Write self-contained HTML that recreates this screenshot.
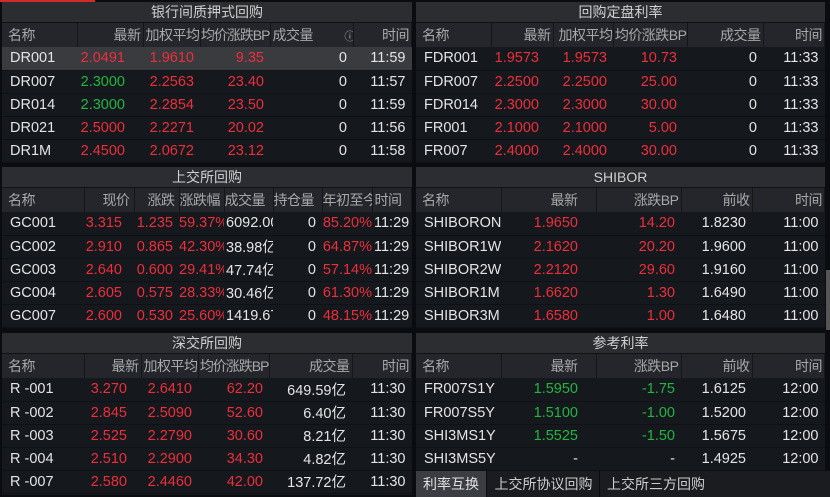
<!DOCTYPE html>
<html><head><meta charset="utf-8"><style>
*{margin:0;padding:0;box-sizing:border-box}
body{width:830px;height:497px;background:#0b0c10;overflow:hidden;position:relative;font-family:"Liberation Sans","Noto Sans CJK SC",sans-serif;font-size:14.5px;color:#e4e4e4}
.p{position:absolute;background:#15181d}
.t{height:21px;line-height:21px;text-align:center;background:#2b2d31;color:#cfcfcf;font-size:14px;border-bottom:1px solid #111}
table{border-collapse:collapse;table-layout:fixed;width:100%}
td{height:23px;white-space:nowrap;overflow:hidden;text-align:right;padding-right:6px;border-bottom:1px solid #0f1115}
tr.h td{height:24px;background:#24262b;color:#a8a8a8;border-right:1px solid #15171b;border-bottom:none;padding-right:2px;font-size:14px;letter-spacing:-0.5px}
td:first-child{text-align:left;padding-left:8px}
tr.h td:first-child{padding-left:6px}
tr.sel td{background:#3a3b3f}
.r{color:#ec2f3b}.g{color:#23b540}
.tabs{position:absolute;left:416px;top:471px;width:414px;height:26px;background:#1a1c20}
.tabs span{position:absolute;top:0;height:26px;line-height:26px;color:#ccc;font-size:14px;text-align:center;border-right:1px solid #0b0c10}
.a td:nth-child(2){padding-right:18px}
.b td:nth-child(2){padding-right:14px}
</style></head><body>
<div style="position:absolute;left:0;top:0;width:95px;height:2px;background:#d42a2a"></div>

<div class="p" style="left:2px;top:2px;width:410px;height:161px">
<div class="t">银行间质押式回购</div>
<table class="a"><colgroup><col style="width:75px"><col style="width:66px"><col style="width:57px"><col style="width:70px"><col style="width:83px"><col></colgroup>
<tr class="h"><td>名称</td><td style="padding-right:2px">最新</td><td style="padding:0">加权平均</td><td style="padding:0;letter-spacing:-1px">均价涨跌BP</td><td style="text-align:left;padding-left:2px">成交量 <span style="margin-left:28px;font-size:11px">ⓘ</span></td><td>时间</td></tr>
<tr class="sel"><td>DR001</td><td class="r">2.0491</td><td class="r">1.9610</td><td class="r">9.35</td><td>0</td><td>11:59</td></tr>
<tr><td>DR007</td><td class="g">2.3000</td><td class="r">2.2563</td><td class="r">23.40</td><td>0</td><td>11:57</td></tr>
<tr><td>DR014</td><td class="g">2.3000</td><td class="r">2.2854</td><td class="r">23.50</td><td>0</td><td>11:59</td></tr>
<tr><td>DR021</td><td class="r">2.5000</td><td class="r">2.2271</td><td class="r">20.02</td><td>0</td><td>11:56</td></tr>
<tr><td>DR1M</td><td class="r">2.4500</td><td class="r">2.0672</td><td class="r">23.12</td><td>0</td><td>11:58</td></tr>
</table></div>

<div class="p" style="left:2px;top:167px;width:410px;height:161px">
<div class="t">上交所回购</div>
<table><colgroup><col style="width:82px"><col style="width:50px"><col style="width:45px"><col style="width:45px"><col style="width:49px"><col style="width:49px"><col style="width:50px"><col></colgroup>
<tr class="h"><td>名称</td><td style="padding-right:4px">现价</td><td style="padding-right:4px">涨跌</td><td style="text-align:left;padding-left:0">涨跌幅</td><td style="text-align:left;padding-left:0">成交量</td><td style="text-align:left;padding-left:0">持仓量</td><td style="text-align:left;padding-left:0">年初至今</td><td style="text-align:left;padding-left:2px">时间</td></tr>
<tr><td>GC001</td><td class="r" style="padding-right:12px">3.315</td><td class="r">1.235</td><td class="r" style="padding-right:0">59.37%</td><td style="text-align:left;padding:0 0 0 2px">6092.00</td><td>0</td><td class="r" style="padding-right:0">85.20%</td><td style="text-align:left;padding:0 0 0 2px">11:29</td></tr>
<tr><td>GC002</td><td class="r" style="padding-right:12px">2.910</td><td class="r">0.865</td><td class="r" style="padding-right:0">42.30%</td><td style="text-align:left;padding:0 0 0 2px">38.98亿</td><td>0</td><td class="r" style="padding-right:0">64.87%</td><td style="text-align:left;padding:0 0 0 2px">11:29</td></tr>
<tr><td>GC003</td><td class="r" style="padding-right:12px">2.640</td><td class="r">0.600</td><td class="r" style="padding-right:0">29.41%</td><td style="text-align:left;padding:0 0 0 2px">47.74亿</td><td>0</td><td class="r" style="padding-right:0">57.14%</td><td style="text-align:left;padding:0 0 0 2px">11:29</td></tr>
<tr><td>GC004</td><td class="r" style="padding-right:12px">2.605</td><td class="r">0.575</td><td class="r" style="padding-right:0">28.33%</td><td style="text-align:left;padding:0 0 0 2px">30.46亿</td><td>0</td><td class="r" style="padding-right:0">61.30%</td><td style="text-align:left;padding:0 0 0 2px">11:29</td></tr>
<tr><td>GC007</td><td class="r" style="padding-right:12px">2.600</td><td class="r">0.530</td><td class="r" style="padding-right:0">25.60%</td><td style="text-align:left;padding:0 0 0 2px">1419.67</td><td>0</td><td class="r" style="padding-right:0">48.15%</td><td style="text-align:left;padding:0 0 0 2px">11:29</td></tr>
</table></div>

<div class="p" style="left:2px;top:333px;width:410px;height:162px">
<div class="t">深交所回购</div>
<table class="b"><colgroup><col style="width:82px"><col style="width:57px"><col style="width:57px"><col style="width:71px"><col style="width:83px"><col></colgroup>
<tr class="h"><td>名称</td><td style="padding-right:2px">最新</td><td style="padding:0">加权平均</td><td style="padding:0;letter-spacing:-1px">均价涨跌BP</td><td>成交量</td><td>时间</td></tr>
<tr><td>R -001</td><td class="r">3.270</td><td class="r">2.6410</td><td class="r">62.20</td><td>649.59亿</td><td>11:30</td></tr>
<tr><td>R -002</td><td class="r">2.845</td><td class="r">2.5090</td><td class="r">52.60</td><td>6.40亿</td><td>11:30</td></tr>
<tr><td>R -003</td><td class="r">2.525</td><td class="r">2.2790</td><td class="r">30.60</td><td>8.21亿</td><td>11:30</td></tr>
<tr><td>R -004</td><td class="r">2.510</td><td class="r">2.2900</td><td class="r">34.30</td><td>4.82亿</td><td>11:30</td></tr>
<tr><td>R -007</td><td class="r">2.580</td><td class="r">2.4460</td><td class="r">42.00</td><td>137.72亿</td><td>11:30</td></tr>
</table></div>

<div class="p" style="left:416px;top:2px;width:409px;height:161px">
<div class="t">回购定盘利率</div>
<table class="b"><colgroup><col style="width:75px"><col style="width:62px"><col style="width:60px"><col style="width:74px"><col style="width:76px"><col></colgroup>
<tr class="h"><td>名称</td><td style="padding-right:2px">最新</td><td style="padding:0">加权平均</td><td style="padding:0">均价涨跌BP</td><td>成交量</td><td>时间</td></tr>
<tr><td>FDR001</td><td class="r">1.9573</td><td class="r">1.9573</td><td class="r" style="padding-right:10px">10.73</td><td>0</td><td>11:33</td></tr>
<tr><td>FDR007</td><td class="r">2.2500</td><td class="r">2.2500</td><td class="r" style="padding-right:10px">25.00</td><td>0</td><td>11:33</td></tr>
<tr><td>FDR014</td><td class="r">2.3000</td><td class="r">2.3000</td><td class="r" style="padding-right:10px">30.00</td><td>0</td><td>11:33</td></tr>
<tr><td>FR001</td><td class="r">2.1000</td><td class="r">2.1000</td><td class="r" style="padding-right:10px">5.00</td><td>0</td><td>11:33</td></tr>
<tr><td>FR007</td><td class="r">2.4000</td><td class="r">2.4000</td><td class="r" style="padding-right:10px">30.00</td><td>0</td><td>11:33</td></tr>
</table></div>

<div class="p" style="left:416px;top:167px;width:409px;height:161px">
<div class="t">SHIBOR</div>
<table class="a"><colgroup><col style="width:85px"><col style="width:95px"><col style="width:85px"><col style="width:71px"><col></colgroup>
<tr class="h"><td>名称</td><td>最新</td><td>涨跌BP</td><td>前收</td><td>时间</td></tr>
<tr><td>SHIBORON</td><td class="r">1.9650</td><td class="r">14.20</td><td>1.8230</td><td>11:00</td></tr>
<tr><td>SHIBOR1W</td><td class="r">2.1620</td><td class="r">20.20</td><td>1.9600</td><td>11:00</td></tr>
<tr><td>SHIBOR2W</td><td class="r">2.2120</td><td class="r">29.60</td><td>1.9160</td><td>11:00</td></tr>
<tr><td>SHIBOR1M</td><td class="r">1.6620</td><td class="r">1.30</td><td>1.6490</td><td>11:00</td></tr>
<tr><td>SHIBOR3M</td><td class="r">1.6580</td><td class="r">1.00</td><td>1.6480</td><td>11:00</td></tr>
</table></div>
<div style="position:absolute;left:826px;top:270px;width:4px;height:60px;background:#555"></div>

<div class="p" style="left:416px;top:333px;width:409px;height:137px">
<div class="t">参考利率</div>
<table class="a"><colgroup><col style="width:85px"><col style="width:95px"><col style="width:85px"><col style="width:71px"><col></colgroup>
<tr class="h"><td>名称</td><td>最新</td><td>涨跌BP</td><td>前收</td><td>时间</td></tr>
<tr><td>FR007S1Y</td><td class="g">1.5950</td><td class="g">-1.75</td><td>1.6125</td><td>12:00</td></tr>
<tr><td>FR007S5Y</td><td class="g">1.5100</td><td class="g">-1.00</td><td>1.5200</td><td>12:00</td></tr>
<tr><td>SHI3MS1Y</td><td class="g">1.5525</td><td class="g">-1.50</td><td>1.5675</td><td>12:00</td></tr>
<tr><td>SHI3MS5Y</td><td>-</td><td>-</td><td>1.4925</td><td>12:00</td></tr>
</table></div>

<div class="tabs">
<span style="left:0;width:71px;background:#3c3d42;color:#e0e0e0">利率互换</span>
<span style="left:72px;width:112px">上交所协议回购</span>
<span style="left:185px;width:110px;border:none">上交所三方回购</span>
</div>
</body></html>
